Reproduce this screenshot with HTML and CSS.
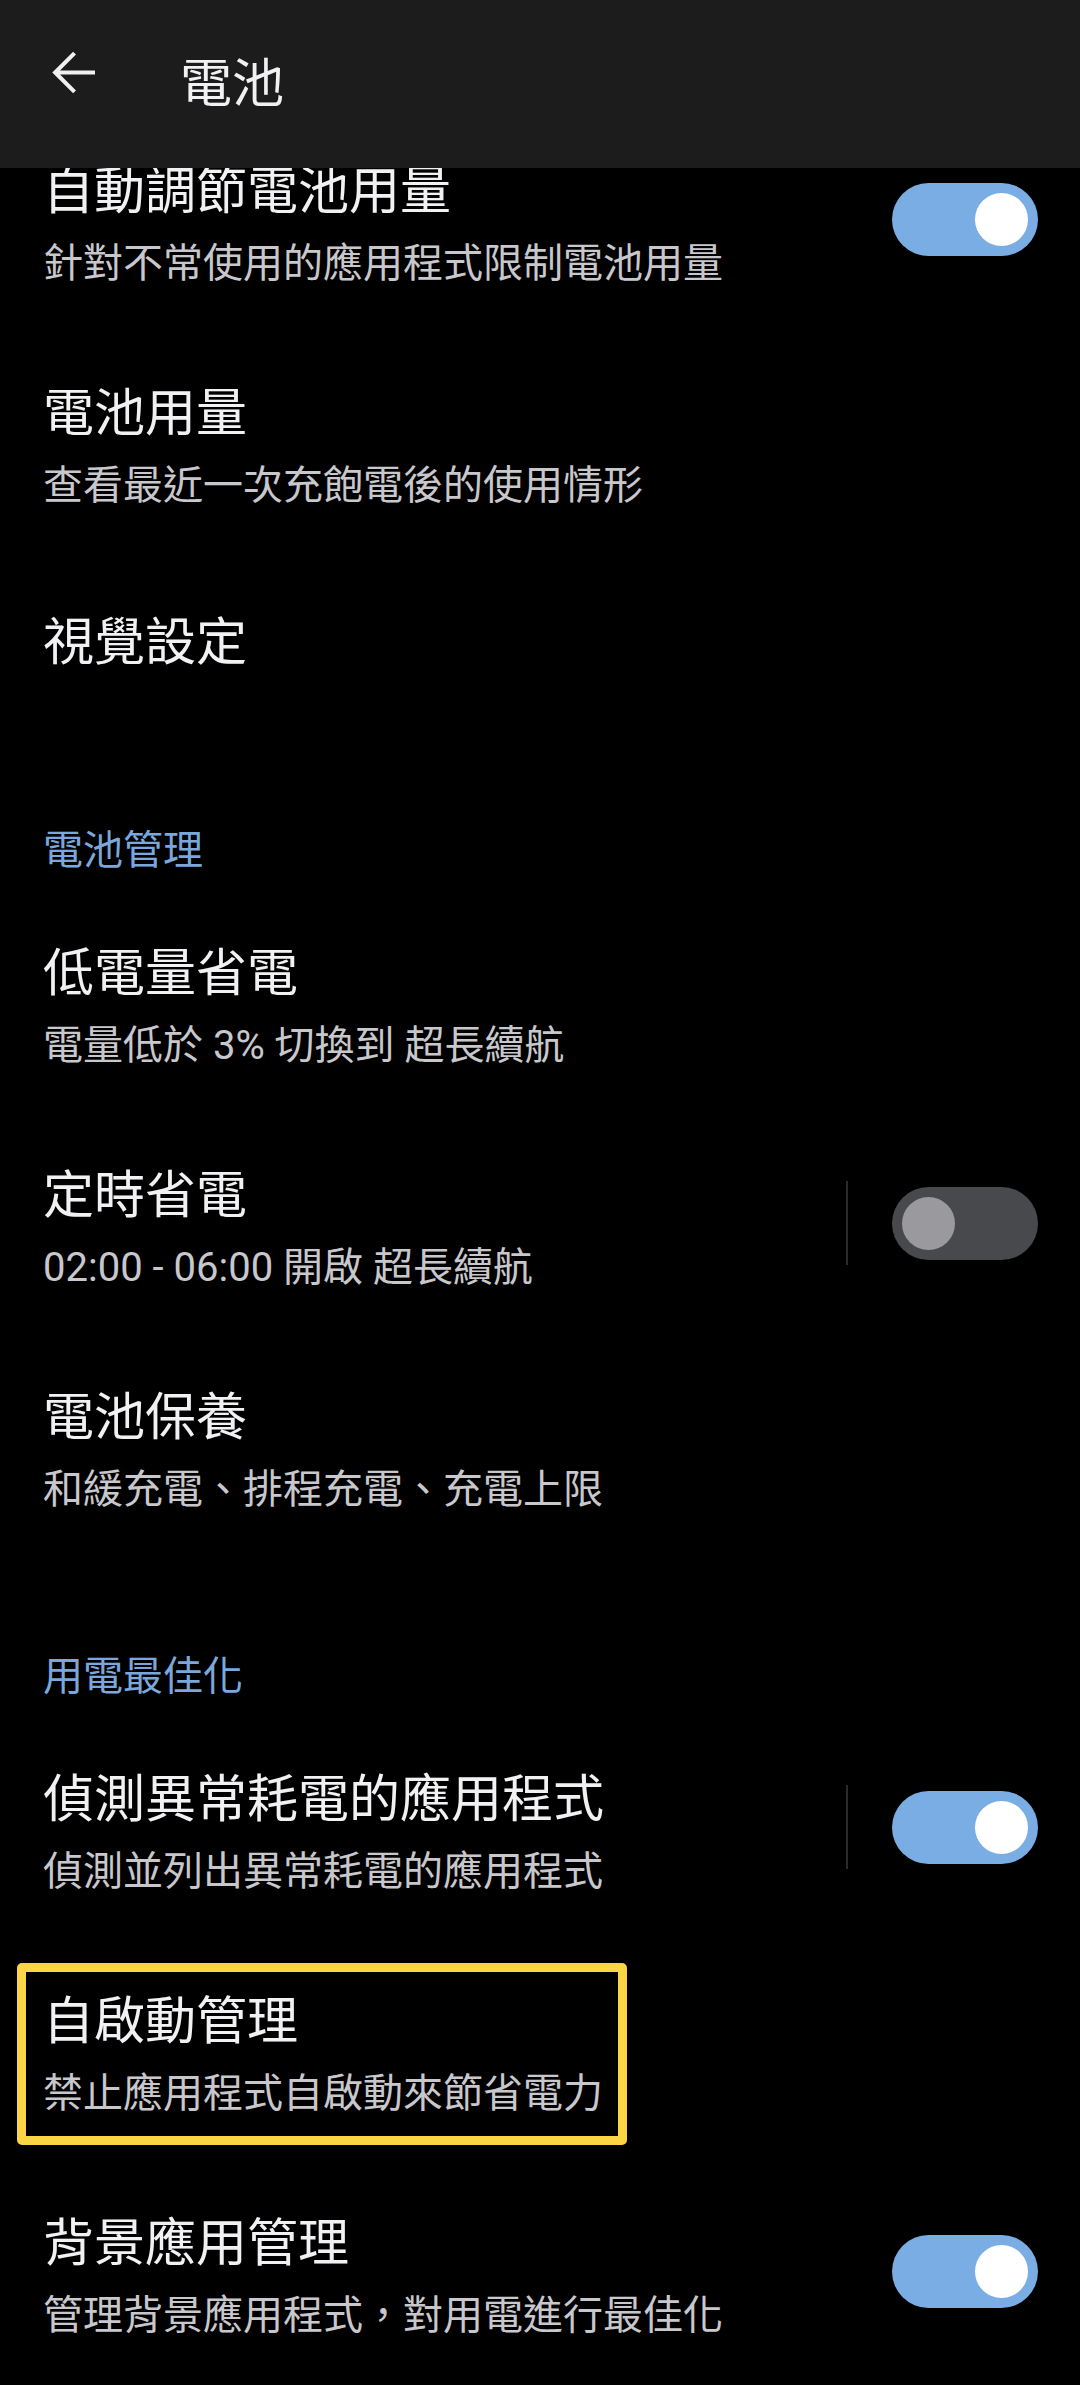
FILE: index.html
```html
<!DOCTYPE html>
<html lang="zh-Hant">
<head>
<meta charset="utf-8">
<title>電池</title>
<link rel="stylesheet" href="styles.css">
</head>
<body>
<header class="appbar">
  <svg class="back" viewBox="0 0 24 24" width="63" height="63" aria-hidden="true">
    <path d="M20.2 12H5.2 M12.4 4.6 5 12l7.4 7.4" fill="none" stroke="#f0f0f0" stroke-width="1.55" stroke-linejoin="miter"/>
  </svg>
  <h1 class="appbar-title">電池</h1>
</header>

<main class="list">
  <div class="item">
    <div class="text">
      <div class="title">自動調節電池用量</div>
      <div class="summary">針對不常使用的應用程式限制電池用量</div>
    </div>
    <div class="switch on"><span class="knob"></span></div>
  </div>

  <div class="item">
    <div class="text">
      <div class="title">電池用量</div>
      <div class="summary">查看最近一次充飽電後的使用情形</div>
    </div>
  </div>

  <div class="item single">
    <div class="text">
      <div class="title">視覺設定</div>
    </div>
  </div>

  <div class="section">電池管理</div>

  <div class="item">
    <div class="text">
      <div class="title">低電量省電</div>
      <div class="summary">電量低於 3% 切換到 超長續航</div>
    </div>
  </div>

  <div class="item">
    <div class="text">
      <div class="title">定時省電</div>
      <div class="summary">02:00 - 06:00 開啟 超長續航</div>
    </div>
    <div class="divider"></div>
    <div class="switch off"><span class="knob"></span></div>
  </div>

  <div class="item">
    <div class="text">
      <div class="title">電池保養</div>
      <div class="summary">和緩充電、排程充電、充電上限</div>
    </div>
  </div>

  <div class="section">用電最佳化</div>

  <div class="item">
    <div class="text">
      <div class="title">偵測異常耗電的應用程式</div>
      <div class="summary">偵測並列出異常耗電的應用程式</div>
    </div>
    <div class="divider"></div>
    <div class="switch on"><span class="knob"></span></div>
  </div>

  <div class="item marked">
    <div class="text">
      <div class="title">自啟動管理</div>
      <div class="summary">禁止應用程式自啟動來節省電力</div>
    </div>
    <div class="highlight-box"></div>
  </div>

  <div class="item">
    <div class="text">
      <div class="title">背景應用管理</div>
      <div class="summary">管理背景應用程式，對用電進行最佳化</div>
    </div>
    <div class="switch on"><span class="knob"></span></div>
  </div>
</main>
</body>
</html>
```

FILE: styles.css
```css
html, body {
  margin: 0;
  padding: 0;
  background: #000;
}

body {
  width: 1080px;
  height: 2385px;
  overflow: hidden;
  font-family: Roboto, "Noto Sans CJK TC", "Noto Sans", sans-serif;
  color: #f1f1f3;
}

.appbar {
  position: fixed;
  top: 0;
  left: 0;
  right: 0;
  height: 168px;
  box-sizing: border-box;
  background: #1c1c1c;
  display: flex;
  align-items: flex-start;
  padding: 41px 0 0 42px;
  z-index: 2;
}

.back {
  display: block;
  flex: none;
}

.appbar-title {
  margin: 4px 0 0 75px;
  font-size: 52px;
  font-weight: 400;
  line-height: 80px;
  color: #f1f1f3;
}

.list {
  padding-top: 108px;
}

.item {
  display: flex;
  align-items: center;
  padding: 0 42px 0 43px;
}

.item .text {
  flex: 1;
  min-width: 0;
  padding: 50px 0 36px;
}

.item.single .text {
  padding: 57px 0 53px;
}

.title {
  font-size: 51px;
  line-height: 68px;
  color: #f1f1f3;
  white-space: nowrap;
}

.summary {
  margin-top: 8px;
  font-size: 40px;
  line-height: 60px;
  color: #c8c8cc;
  white-space: nowrap;
}

.section {
  padding: 93px 43px 11px;
  font-size: 40px;
  line-height: 56px;
  color: #7ba8dc;
}

.divider {
  flex: none;
  width: 2px;
  height: 84px;
  background: #2b2b2d;
  margin-right: 44px;
}

.switch {
  flex: none;
  width: 146px;
  height: 73px;
  border-radius: 37px;
  box-sizing: border-box;
  padding: 10px;
  display: flex;
  align-items: center;
}

.switch .knob {
  width: 53px;
  height: 53px;
  border-radius: 50%;
}

.switch.on {
  background: #7aade3;
  justify-content: flex-end;
}

.switch.on .knob {
  background: #ffffff;
}

.switch.off {
  background: #48494c;
  justify-content: flex-start;
}

.switch.off .knob {
  background: #9a9a9e;
}

.item.marked {
  position: relative;
}

.highlight-box {
  position: absolute;
  left: 17px;
  top: 25px;
  width: 610px;
  height: 182px;
  box-sizing: border-box;
  border: 9px solid #fcd544;
  border-radius: 5px;
}
```
